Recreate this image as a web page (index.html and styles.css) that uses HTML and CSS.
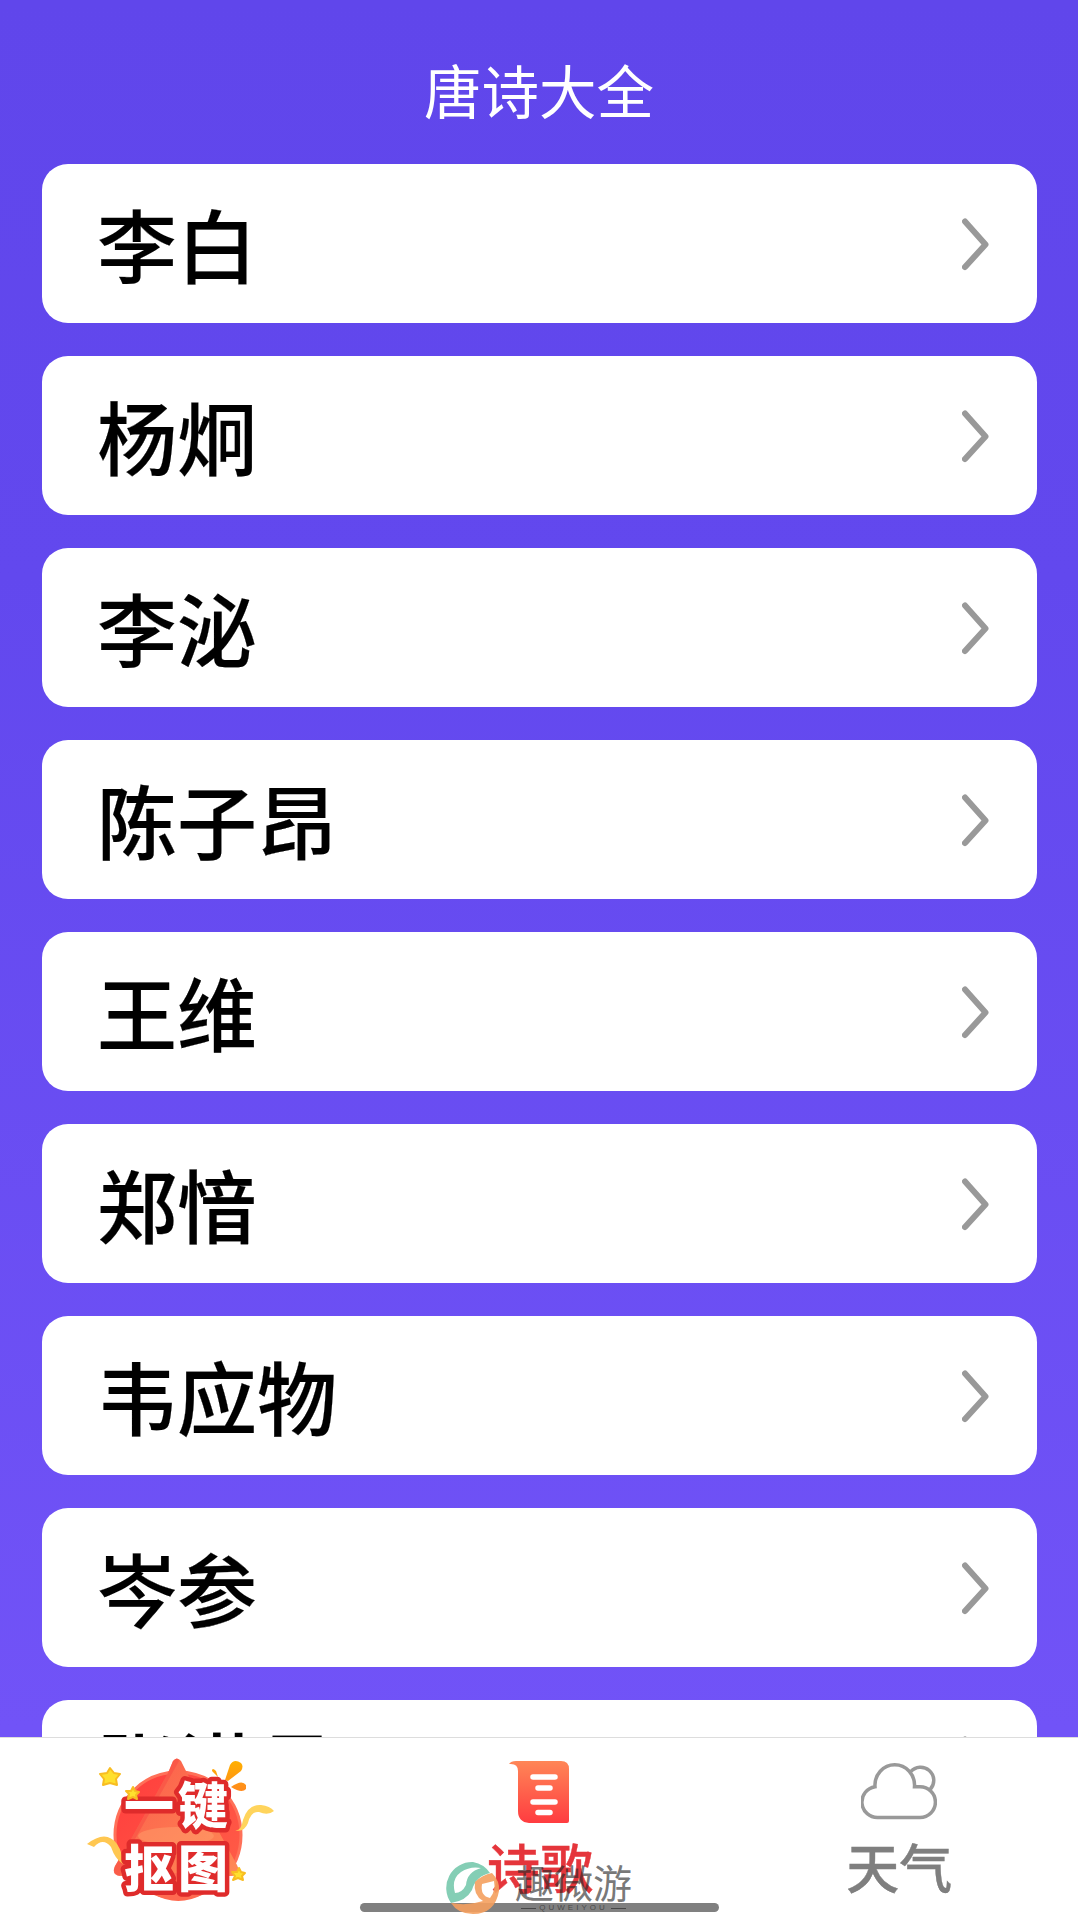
FILE: index.html
```
<!DOCTYPE html>
<html lang="zh-CN">
<head>
    <meta charset="UTF-8">
    <title>唐诗大全</title>
    <link rel="stylesheet" href="styles.css">
</head>
<body>
    <svg class="symbols">
        <symbol id="arrow" viewBox="0 0 28 54">
            <path d="M3 4.500 L23.500 27.500 L3 50"/>
        </symbol>
    </svg>
    <h1 class="title">唐诗大全</h1>
    <ul class="poets">
        <li><span>李白</span><svg class="arrow"><use href="#arrow"/></svg></li>
        <li><span>杨炯</span><svg class="arrow"><use href="#arrow"/></svg></li>
        <li><span>李泌</span><svg class="arrow"><use href="#arrow"/></svg></li>
        <li><span>陈子昂</span><svg class="arrow"><use href="#arrow"/></svg></li>
        <li><span>王维</span><svg class="arrow"><use href="#arrow"/></svg></li>
        <li><span>郑愔</span><svg class="arrow"><use href="#arrow"/></svg></li>
        <li><span>韦应物</span><svg class="arrow"><use href="#arrow"/></svg></li>
        <li><span>岑参</span><svg class="arrow"><use href="#arrow"/></svg></li>
        <li class="last"><span>张洪昌</span><svg class="arrow"><use href="#arrow"/></svg></li>
    </ul>

    <div class="tabbar">
        <div class="tab">
            <svg class="cutout" viewBox="0 0 200 158">
                <defs>
                    <linearGradient id="ball" x1="0" y1="0" x2="1" y2="1">
                        <stop offset="0" stop-color="#ff3d3d"/>
                        <stop offset="1" stop-color="#ff6048"/>
                    </linearGradient>
                    <linearGradient id="cone" x1="0" y1="0" x2="1" y2="1">
                        <stop offset="0" stop-color="#fb5a4a"/>
                        <stop offset="1" stop-color="#ff8a55"/>
                    </linearGradient>
                    <linearGradient id="gold" x1="0" y1="0" x2="0" y2="1">
                        <stop offset="0" stop-color="#ffb000"/>
                        <stop offset="1" stop-color="#ff8a1e"/>
                    </linearGradient>
                </defs>
                <circle cx="98" cy="82" r="63" fill="url(#ball)" stroke="#ff7058" stroke-width="3"/>
                <path d="M93 8 Q97 3 101 8 L108 22 L157 112 Q162 122 152 123 H41 Q31 122 35 113 L50 88 L88 20Z" fill="url(#cone)"/>
                <path d="M93 8 Q97 3 99 8 L50 95 L40 123 Q31 122 35 113 L50 88 L88 20Z" fill="#f94e45" opacity=".6"/>
                <path d="M48 120 Q98 176 149 120 Z" fill="#ff6a50"/>
                <ellipse cx="96" cy="83" rx="38" ry="9" fill="#ffa06c" opacity=".5"/>
                <path d="M7 91 Q26 76 37 91 Q43 100 43 111 Q35 106 31 94 Q23 84 14 94 Z" fill="#ffc751"/>
                <path d="M154 77 Q161 79 163 67 Q168 51 181 52 Q190 53 194 58 Q188 63 179 59 Q171 58 168 70 Q164 80 154 77Z" fill="#ffd45c"/>
                <path d="M145 27 L150 12 Q154 5 161 10 Q164 13 161 18 L148 28Z M151 34 Q162 26 166 32 V36 Q162 41 151 34Z M132 18 Q132 14 136 18 L138 24Z" fill="url(#gold)"/>
                <g class="cutout-text">
                    <text x="44" y="71">一</text>
                    <text x="98" y="71">键</text>
                    <text x="44" y="134">抠</text>
                    <text x="98" y="134">图</text>
                </g>
                <g class="stars">
                    <path d="M30 15 L34 20 L40 21 L36 26 L37 32 L30 30 L23 32 L24 26 L20 21 L27 20Z"/>
                    <path d="M53 34 L55 38 L59 39 L56 42 L57 46 L53 44 L48 46 L49 41 L46 38 L51 38Z"/>
                    <path d="M159 115 L161 119 L165 120 L162 123 L163 127 L158 125 L153 127 L155 123 L152 119 L157 119Z"/>
                </g>
            </svg>
        </div>
        <div class="tab active">
            <svg class="icon-poem" viewBox="0 0 64 66">
                <defs>
                    <linearGradient id="paper" x1="0" y1="0" x2="0" y2="1">
                        <stop offset="0" stop-color="#ff8657"/>
                        <stop offset="1" stop-color="#ff3c40"/>
                    </linearGradient>
                </defs>
                <path d="M2 4 Q4 1 9 1 H54 Q62 1 62 9 V61 Q62 63 60 63 H22 Q11 62 11 51 V11 Q11 3 2 4Z" fill="url(#paper)"/>
                <path d="M26 17 H48 M31 28 H43 M26 42 H48 M31 52.500 H43" stroke="#fff" stroke-width="5.500" stroke-linecap="round"/>
            </svg>
            <span>诗歌</span>
        </div>
        <div class="tab">
            <svg class="icon-weather" viewBox="0 0 76 58">
                <path d="M14 24.700 A19.800 20.500 0 1 1 53.500 24.700 H59 A15.400 15.400 0 0 1 59 55.500 H17 A15.500 15.500 0 0 1 14 24.700 Z M49.700 9.700 A13 13 0 0 1 69.500 27"/>
            </svg>
            <span>天气</span>
        </div>
    </div>
    <div class="home-bar"></div>

    <!-- 水印 -->
    <div class="watermark">
        <svg class="mark-logo" viewBox="0 0 54 54">
            <path d="M44 12 Q38 3 27 1 A26 26 0 0 0 5 42 Q20 40 26 29 Q30 15 44 12Z M35 7 Q21 11 20 24 Q16 32 9 32 Q5 18 15 11 Q24 5 35 7Z" fill="#77c9ad" fill-rule="evenodd"/>
            <path d="M5 42 Q22 45 37 40 Q27 34 29 21 Q36 14 46 12 Q54 20 53 30 Q49 53 27 53 Q12 53 5 42Z M36 23 Q34 35 44 37 Q50 30 48 20Z" fill="#f5a05f" fill-rule="evenodd"/>
        </svg>
        <div class="mark-name">
            <b>趣微游</b>
            <small>QUWEIYOU</small>
        </div>
    </div>
</body>
</html>
```

FILE: styles.css
```
body {
    margin: 0;
    height: 1918px;
    overflow: hidden;
    display: flex;
    flex-direction: column;
    background: linear-gradient(#6046eb, #6248ee 30%, #7153f7 90%);
    font-family: "Noto Sans CJK SC", sans-serif;
}
ul, li { margin: 0; padding: 0; list-style: none; }
.symbols { position: absolute; width: 0; height: 0; }

.title {
    flex: none;
    margin: 0;
    height: 164px;
    box-sizing: border-box;
    padding-top: 47px;
    line-height: 84px;
    text-align: center;
    font-size: 57.500px;
    font-weight: 400;
    color: #fff;
}

/* 诗人列表 */
.poets {
    flex: 1;
    min-height: 0;
    overflow: hidden;
    padding: 0 41px 0 42px;
}
.poets li {
    display: flex;
    align-items: center;
    justify-content: space-between;
    box-sizing: border-box;
    height: 159px;
    margin-bottom: 33px;
    padding: 0 47px 0 55px;
    border-radius: 26px;
    background: #fff;
    font-size: 80px;
    font-weight: 500;
    line-height: 156px;
    color: #000;
    -webkit-text-stroke: .2px #000;
}
.poets span { margin-bottom: 3px; }
.poets .last { padding-bottom: 26px; }
.last .arrow { margin-bottom: 10px; }
.arrow {
    width: 28px; height: 54px;
    fill: none;
    stroke: #999;
    stroke-width: 6px;
    stroke-linecap: round;
    stroke-linejoin: round;
}

/* 底部导航 */
.tabbar {
    flex: none;
    display: flex;
    box-sizing: border-box;
    height: 181px;
    border-top: 1px solid #ddd;
    background: #fff;
}
.tab {
    flex: 1;
    display: flex;
    flex-direction: column;
    align-items: center;
    font-size: 53px;
    font-weight: 500;
    line-height: 60px;
    color: #7f7f7f;
    -webkit-text-stroke: .4px;
}
.tab span { padding-left: 2px; }
.tab.active { color: #e5353b; }
.cutout { width: 200px; height: 158px; margin-top: 15px; }
.stars { fill: #ffe02e; stroke: #f8bd22; stroke-width: 2px; stroke-linejoin: round; }
.cutout-text {
    fill: #fff;
    stroke: #df2b2b;
    stroke-width: 9px;
    stroke-linejoin: round;
    paint-order: stroke;
    font-size: 50px;
    font-weight: 900;
    -webkit-text-stroke: 9px #df2b2b;
}
.icon-poem { width: 64px; height: 66px; margin: 22px 0 10px; }
.icon-weather {
    width: 76px; height: 58px;
    margin: 24px 0 16px 2px;
    fill: none;
    stroke: #999;
    stroke-width: 3.500px;
}

.home-bar {
    position: absolute;
    left: 360px; top: 1903px;
    width: 359px; height: 9px;
    border-radius: 5px;
    background: #808080;
}

.watermark {
    position: absolute;
    left: 446px; top: 1861px;
    display: flex;
    opacity: .9;
}
.mark-logo { width: 54px; height: 54px; }
.mark-name {
    display: flex;
    flex-direction: column;
    align-items: center;
    margin-left: 15px;
    color: rgba(40, 40, 40, .7);
}
.mark-name b { font-size: 39px; font-weight: 400; line-height: 41px; }
.mark-name small {
    display: flex;
    align-items: center;
    gap: 3px;
    font: 8px/12px "Liberation Sans", sans-serif;
    letter-spacing: 3px;
}
.mark-name small::before, .mark-name small::after {
    content: "";
    width: 15px;
    border-top: 1px solid;
}
```
